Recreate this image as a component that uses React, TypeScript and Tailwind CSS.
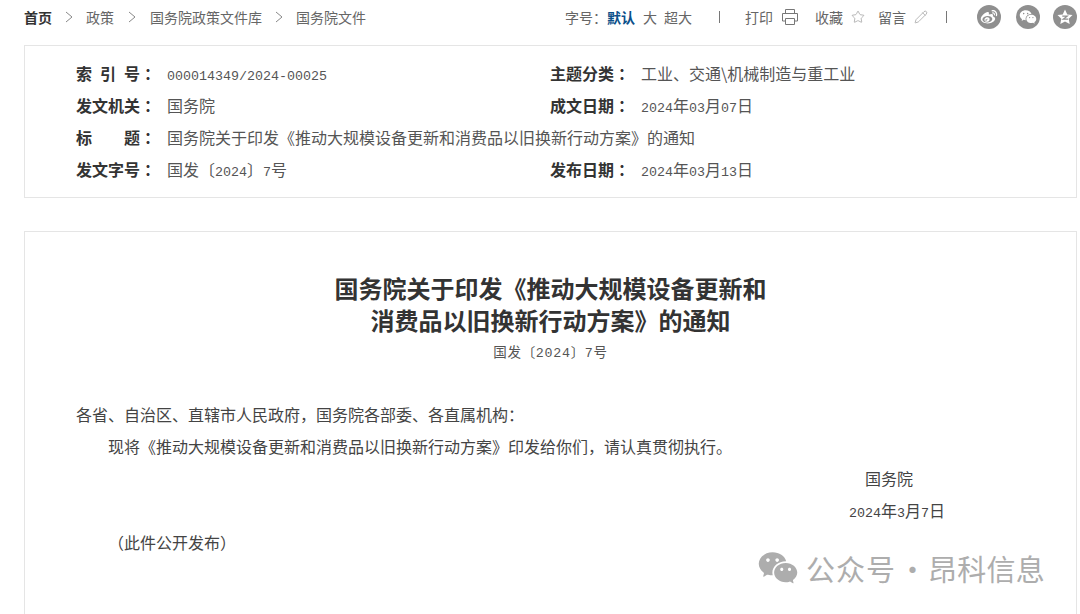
import { Pencil, Star } from "lucide-react";
import { RiWechatFill, RiWeiboFill } from "react-icons/ri";

const cjk = "font-['Noto_Sans_CJK_SC','Liberation_Sans',sans-serif]";

function Num({ children }: { children: string }) {
  return <span className="font-['Liberation_Mono',monospace] text-[13.33px] leading-none">{children}</span>;
}

function Chevron() {
  return (
    <svg width="8" height="12" viewBox="0 0 8 12" fill="none" stroke="#888" strokeWidth="1">
      <path d="M1 1l6 5-6 5" />
    </svg>
  );
}

function Meta({ label, children }: { label: string; children: React.ReactNode }) {
  return (
    <div className="flex h-8 items-center">
      <div className="w-[91px] shrink-0 whitespace-pre text-base font-bold text-[#333]">
        {label}
        <span className="ml-[4px]">：</span>
      </div>
      <div className="whitespace-nowrap text-base text-[#555]">{children}</div>
    </div>
  );
}

function Circle({ children }: { children: React.ReactNode }) {
  return (
    <div className="flex h-6 w-6 shrink-0 items-center justify-center rounded-full bg-[#8f8f8f] text-white">{children}</div>
  );
}

export default function App() {
  return (
    <div className={"relative h-[614px] w-[1080px] overflow-hidden bg-white " + cjk}>
      {/* top bar */}
      <div className="flex h-[45px] items-center whitespace-nowrap pb-[11px] pl-6 text-sm text-[#666]">
        <span className="font-bold text-[#333]">首页</span>
        <span className="mx-[13px]"><Chevron /></span>
        <span>政策</span>
        <span className="mx-[14px]"><Chevron /></span>
        <span>国务院政策文件库</span>
        <span className="mx-[13px]"><Chevron /></span>
        <span>国务院文件</span>

        <span className="ml-[199px]">字号：</span>
        <span className="font-bold text-[#0b4f8a]">默认</span>
        <span className="ml-[8px]">大</span>
        <span className="ml-[7px]">超大</span>
        <span className="ml-[27px] h-3 w-px bg-[#777]" />
        <span className="ml-[25px]">打印</span>
        <svg className="ml-[8px] shrink-0" width="18" height="18" viewBox="0 0 18 18" fill="none" stroke="#777" strokeWidth="1">
          <path d="M4.5 5V1.5h9V5M4.5 13H1.5V5.5h15V13h-3M4.5 10.5h9v6h-9z" />
        </svg>
        <span className="ml-[16px]">收藏</span>
        <Star className="ml-[8px] shrink-0" size={14} color="#999" strokeWidth={1.2} />
        <span className="ml-[13px]">留言</span>
        <Pencil className="ml-[8px] shrink-0" size={14} color="#999" strokeWidth={1.2} />
        <span className="ml-[18px] h-3 w-px bg-[#777]" />
        <div className="ml-[30px] flex">
          <Circle><RiWeiboFill size={18} /></Circle>
          <div className="ml-[15px]"><Circle><RiWechatFill size={18} /></Circle></div>
          <div className="ml-[13px]">
            <Circle>
              <svg width="18" height="18" viewBox="0 0 18 18">
                <path fill="#fff" d="M9 1.5l2.3 4.9 5.2.7-3.8 3.6 1 5.3L9 13.4 4.3 16l1-5.3L1.5 7.1l5.2-.7z" />
                <path fill="none" stroke="#8f8f8f" strokeWidth="1.2" d="M6.3 8.2h4.9l-4 3h5" />
              </svg>
            </Circle>
          </div>
        </div>
      </div>

      {/* document info */}
      <div className="ml-6 h-[153px] w-[1053px] border border-[#e5e5e5] pl-[51px] pt-[11px]">
        <div className="grid grid-cols-[474px_1fr]">
          <Meta label={"索\u2002引\u2002号"}><Num>000014349/2024-00025</Num></Meta>
          <Meta label="主题分类">工业、交通\机械制造与重工业</Meta>
          <Meta label="发文机关">国务院</Meta>
          <Meta label="成文日期"><Num>2024</Num>年<Num>03</Num>月<Num>07</Num>日</Meta>
          <div className="col-span-2">
            <Meta label="标　　题">国务院关于印发《推动大规模设备更新和消费品以旧换新行动方案》的通知</Meta>
          </div>
          <Meta label="发文字号">国发〔<Num>2024</Num>〕<Num>7</Num>号</Meta>
          <Meta label="发布日期"><Num>2024</Num>年<Num>03</Num>月<Num>13</Num>日</Meta>
        </div>
      </div>

      {/* document body */}
      <div className="ml-6 mt-[33px] h-[500px] w-[1053px] border border-[#e5e5e5] px-[51px] pt-[40px]">
        <h1 className="text-center text-2xl leading-8 font-bold text-[#333]">
          国务院关于印发《推动大规模设备更新和
          <br />
          消费品以旧换新行动方案》的通知
        </h1>
        <p className="mt-[3px] text-center text-[13.5px] leading-6 tracking-[0.7px] text-[#555]">
          国发〔<Num>2024</Num>〕<Num>7</Num>号
        </p>
        <div className="mt-[35px] text-base leading-8 text-[#444]">
          <p>各省、自治区、直辖市人民政府，国务院各部委、各直属机构：</p>
          <p className="pl-8">现将《推动大规模设备更新和消费品以旧换新行动方案》印发给你们，请认真贯彻执行。</p>
          <p className="pl-[789px]">国务院</p>
          <p className="pl-[773px]"><Num>2024</Num>年<Num>3</Num>月<Num>7</Num>日</p>
          <p className="pl-8">（此件公开发布）</p>
        </div>
      </div>

      {/* watermark */}
      <div className="absolute left-[757px] top-[547px] flex items-center whitespace-nowrap text-[#adadad]">
        <RiWechatFill size={42} />
        <span className="ml-[7px] text-[29px] leading-10 tracking-[1px]">公众号</span>
        <span className="ml-[2px] text-[29px] leading-10">·</span>
        <span className="ml-[1px] text-[29px] leading-10 tracking-[0.2px]">昂科信息</span>
      </div>
    </div>
  );
}
